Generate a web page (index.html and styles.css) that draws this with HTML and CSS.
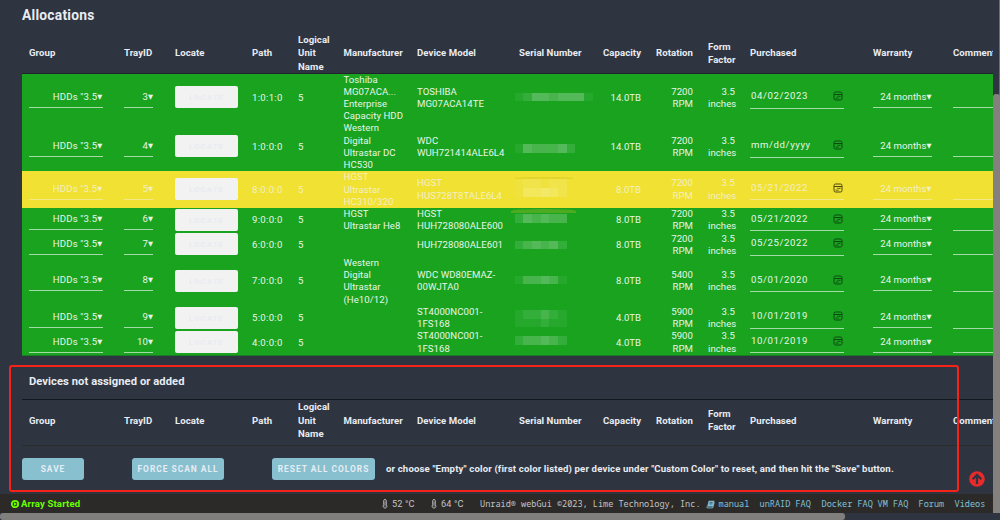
FILE: index.html
```
<!DOCTYPE html>
<html lang="en">
<head>
    <meta charset="utf-8">
    <title>Disk Location</title>
    <link rel="stylesheet" href="styles.css">
</head>
<body>
    <svg class="defs" width="0" height="0">
        <symbol id="calendar" viewBox="0 0 10 10">
            <rect x="1" y="1" width="8" height="8" rx="1.6" fill="none" stroke="currentColor" stroke-width="1"/>
            <path d="M1 3.5h8" stroke="currentColor" stroke-width="1"/>
            <path d="M4.4 5.4h1.1M6.2 5.4h1.2M2.6 7.1h1.1M4.4 7.1h1.1" stroke="currentColor" stroke-width="1.1"/>
        </symbol>
        <symbol id="thermo" viewBox="0 0 6 10">
            <path d="M1.7 5.8V1.8a1.3 1.3 0 0 1 2.6 0v4a1.9 1.9 0 1 1-2.6 0z" fill="none" stroke="currentColor" stroke-width="0.9"/>
            <path d="M3 2.5v5" stroke="currentColor" stroke-width="0.7"/>
        </symbol>
    </svg>

    <div class="content">
        <h1>Allocations</h1>
        <div class="row head">
            <div>Group</div><div>TrayID</div><div>Locate</div><div>Path</div><div>Logical<br>Unit<br>Name</div>
            <div>Manufacturer</div><div>Device Model</div><div>Serial Number</div><div>Capacity</div><div>Rotation</div>
            <div>Form<br>Factor</div><div>Purchased</div><div>Warranty</div><div>Comment</div>
        </div>
        <div class="devices">
            <div class="row">
                <div class="select group">HDDs "3.5<b>▼</b></div><div class="select tray">3<b>▼</b></div>
                <button class="locate">LOCATE</button><div class="path">1:0:1:0</div><div>5</div>
                <div>Toshiba<br>MG07ACA...<br>Enterprise<br>Capacity HDD</div><div>TOSHIBA<br>MG07ACA14TE</div>
                <div class="serial t1"><i class="m1"></i><i class="m2"></i><i class="m4"></i><i class="m4"></i><i class="m3"></i><i class="m4"></i><i class="m4"></i><i class="m4"></i><i class="m1"></i></div>
                <div class="num cap">14.0TB</div><div class="num rot">7200<br>RPM</div><div class="num form">3.5<br>inches</div>
                <div class="date">04/02/2023<svg><use href="#calendar"/></svg></div><div class="select warranty">24 months<b>▼</b></div><div class="comment"></div>
            </div>
            <div class="row">
                <div class="select group">HDDs "3.5<b>▼</b></div><div class="select tray">4<b>▼</b></div>
                <button class="locate">LOCATE</button><div class="path">1:0:0:0</div><div>5</div>
                <div>Western<br>Digital<br>Ultrastar DC<br>HC530</div><div>WDC<br>WUH721414ALE6L4</div>
                <div class="serial t2"><i class="m1"></i><i class="m4"></i><i class="m3"></i><i class="m3"></i><i class="m3"></i><i class="m4"></i><i class="m2"></i></div>
                <div class="num cap">14.0TB</div><div class="num rot">7200<br>RPM</div><div class="num form">3.5<br>inches</div>
                <div class="date">mm/dd/yyyy<svg><use href="#calendar"/></svg></div><div class="select warranty">24 months<b>▼</b></div><div class="comment"></div>
            </div>
            <div class="row warm">
                <div class="select group">HDDs "3.5<b>▼</b></div><div class="select tray">5<b>▼</b></div>
                <button class="locate">LOCATE</button><div class="path">8:0:0:0</div><div>5</div>
                <div>HGST<br>Ultrastar<br>HC310/320</div><div>HGST<br>HUS728T8TALE6L4</div>
                <div class="serial t3"><i class="m1"></i><i class="m2"></i><i class="m2"></i><i class="m1"></i><i class="m2"></i><i class="m2"></i><i class="m1"></i><i class="m3"></i><i class="m3"></i><i class="m4"></i><i class="m3"></i><i class="m2"></i></div>
                <div class="num cap">8.0TB</div><div class="num rot">7200<br>RPM</div><div class="num form">3.5<br>inches</div>
                <div class="date">05/21/2022<svg><use href="#calendar"/></svg></div><div class="select warranty">24 months<b>▼</b></div><div class="comment"></div>
            </div>
            <div class="row">
                <div class="select group">HDDs "3.5<b>▼</b></div><div class="select tray">6<b>▼</b></div>
                <button class="locate">LOCATE</button><div class="path">9:0:0:0</div><div>5</div>
                <div>HGST<br>Ultrastar He8</div><div>HGST<br>HUH728080ALE600</div>
                <div class="serial t4"><i class="m2"></i><i class="m4"></i><i class="m3"></i><i class="m4"></i><i class="m3"></i><i class="m3"></i></div>
                <div class="num cap">8.0TB</div><div class="num rot">7200<br>RPM</div><div class="num form">3.5<br>inches</div>
                <div class="date">05/21/2022<svg><use href="#calendar"/></svg></div><div class="select warranty">24 months<b>▼</b></div><div class="comment"></div>
            </div>
            <div class="row">
                <div class="select group">HDDs "3.5<b>▼</b></div><div class="select tray">7<b>▼</b></div>
                <button class="locate">LOCATE</button><div class="path">6:0:0:0</div><div>5</div>
                <div></div><div>HUH728080ALE601</div>
                <div class="serial t5"><i class="m2"></i><i class="m3"></i><i class="m4"></i><i class="m3"></i><i class="m4"></i><i class="m2"></i></div>
                <div class="num cap">8.0TB</div><div class="num rot">7200<br>RPM</div><div class="num form">3.5<br>inches</div>
                <div class="date">05/25/2022<svg><use href="#calendar"/></svg></div><div class="select warranty">24 months<b>▼</b></div><div class="comment"></div>
            </div>
            <div class="row">
                <div class="select group">HDDs "3.5<b>▼</b></div><div class="select tray">8<b>▼</b></div>
                <button class="locate">LOCATE</button><div class="path">7:0:0:0</div><div>5</div>
                <div>Western<br>Digital<br>Ultrastar<br>(He10/12)</div><div>WDC WD80EMAZ-<br>00WJTA0</div>
                <div class="serial t6"><i class="m1"></i><i class="m3"></i><i class="m3"></i><i class="m4"></i><i class="m3"></i><i class="m1"></i></div>
                <div class="num cap">8.0TB</div><div class="num rot">5400<br>RPM</div><div class="num form">3.5<br>inches</div>
                <div class="date">05/01/2020<svg><use href="#calendar"/></svg></div><div class="select warranty">24 months<b>▼</b></div><div class="comment"></div>
            </div>
            <div class="row">
                <div class="select group">HDDs "3.5<b>▼</b></div><div class="select tray">9<b>▼</b></div>
                <button class="locate">LOCATE</button><div class="path">5:0:0:0</div><div>5</div>
                <div></div><div>ST4000NC001-<br>1FS168</div>
                <div class="serial t7"><i class="m1"></i><i class="m2"></i><i class="m2"></i><i class="m3"></i><i class="m2"></i><i class="m1"></i><i class="m1"></i><i class="m1"></i><i class="m1"></i><i class="m2"></i><i class="m1"></i><i class="m1"></i></div>
                <div class="num cap">4.0TB</div><div class="num rot">5900<br>RPM</div><div class="num form">3.5<br>inches</div>
                <div class="date">10/01/2019<svg><use href="#calendar"/></svg></div><div class="select warranty">24 months<b>▼</b></div><div class="comment"></div>
            </div>
            <div class="row">
                <div class="select group">HDDs "3.5<b>▼</b></div><div class="select tray">10<b>▼</b></div>
                <button class="locate">LOCATE</button><div class="path">4:0:0:0</div><div>5</div>
                <div></div><div>ST4000NC001-<br>1FS168</div>
                <div class="serial t8"><i class="m2"></i><i class="m3"></i><i class="m3"></i><i class="m4"></i><i class="m3"></i><i class="m2"></i></div>
                <div class="num cap">4.0TB</div><div class="num rot">5900<br>RPM</div><div class="num form">3.5<br>inches</div>
                <div class="date">10/01/2019<svg><use href="#calendar"/></svg></div><div class="select warranty">24 months<b>▼</b></div><div class="comment"></div>
            </div>
        </div>

        <h2>Devices not assigned or added</h2>
        <div class="row head unassigned">
            <div>Group</div><div>TrayID</div><div>Locate</div><div>Path</div><div>Logical<br>Unit<br>Name</div>
            <div>Manufacturer</div><div>Device Model</div><div>Serial Number</div><div>Capacity</div><div>Rotation</div>
            <div>Form<br>Factor</div><div>Purchased</div><div>Warranty</div><div>Comment</div>
        </div>
        <div class="actions">
            <button class="save">SAVE</button>
            <button class="scan">FORCE SCAN ALL</button>
            <button class="reset">RESET ALL COLORS</button>
            <span>or choose "Empty" color (first color listed) per device under "Custom Color" to reset, and then hit the "Save" button.</span>
        </div>
    </div>

    <div class="highlight"></div>
    <svg class="back-to-top" viewBox="0 0 16 16">
        <circle cx="8" cy="8" r="7.8" fill="#e72a2a"/>
        <path d="M8 13V4.2M3.7 8.2L8 3.9l4.3 4.3" fill="none" stroke="#2e3440" stroke-width="2.2"/>
    </svg>

    <footer>
        <svg class="play" viewBox="0 0 10 10"><circle cx="5" cy="5" r="3.2" fill="none" stroke="#6aff00" stroke-width="1.8"/><path d="M3.9 3.1L7 5 3.9 6.9z" fill="#6aff00"/></svg>
        <strong>Array Started</strong>
        <svg class="thermo cpu"><use href="#thermo"/></svg><span class="temp">52 °C</span>
        <svg class="thermo"><use href="#thermo"/></svg><span class="temp">64 °C</span>
        <span class="copy">Unraid® webGui ©2023, Lime Technology, Inc.</span>
        <svg class="book" viewBox="0 0 9 9"><path d="M2.7.8h5.8L6.9 6.6H1.2z" fill="#81c0d8"/><path d="M1.4 6.2c-1 .3-.8 1.7.1 1.7h5.2l1.6-5.4" fill="none" stroke="#81c0d8" stroke-width="0.9"/><path d="M3.7 2.4h3M3.3 3.9h3" stroke="#2b2a29" stroke-width="0.6"/></svg>
        <a class="manual">manual</a><a class="faq">unRAID FAQ</a><a class="docker">Docker FAQ</a><a class="vm">VM FAQ</a><a class="forum">Forum</a><a class="videos">Videos</a>
    </footer>

    <div class="scroll-y"><div class="thumb"></div></div>
    <div class="scroll-x"><div class="thumb"></div></div>
</body>
</html>
```
FILE: styles.css
```
* {
    box-sizing: border-box;
}

body {
    margin: 0;
    width: 1000px;
    height: 520px;
    overflow: hidden;
    position: relative;
    background: #2e3440;
    color: #e8ecf2;
    font-family: Roboto, "Noto Sans", sans-serif;
    font-size: 9.6px;
    line-height: 12.23px;
}

.defs {
    position: absolute;
}

.content {
    width: 993px;
    height: 494px;
    padding-left: 22px;
    overflow: hidden;
}

h1 {
    margin: 0;
    padding-top: 6px;
    height: 33px;
    font-size: 13.8px;
    line-height: 18px;
    letter-spacing: 0.25px;
}

.row {
    display: grid;
    grid-template-columns: 102px 51px 77px 46px 45.5px 73.5px 102px 84px 53px 52px 42px 123px 80px 60px;
    width: 991px;
    align-items: center;
    white-space: nowrap;
}

.row > :first-child {
    margin-left: 7px;
}

.head {
    height: 40.5px;
    font-weight: bold;
    font-size: 9.6px;
    line-height: 13.3px;
    letter-spacing: 0.06px;
    border-bottom: 1px solid #20242c;
}

.devices {
    background: #19a31f;
    color: #e6f6e7;
    letter-spacing: 0.05px;
    border-bottom: 1px solid #1b7a28;
}

.row.warm {
    background: #f0e132;
    color: #f3efc4;
}

.select {
    height: 20px;
    padding-top: 3px;
    border-bottom: 1px solid #a5dba8;
    text-align: right;
}

.select b {
    font-family: "DejaVu Sans", sans-serif;
    font-size: 6.5px;
    font-weight: normal;
    vertical-align: 1px;
    line-height: 1;
}

.group {
    width: 73.5px;
    letter-spacing: 0.15px;
}

.tray {
    width: 29px;
}

.warranty {
    width: 58.5px;
}

.path {
    letter-spacing: 0.3px;
}

.locate {
    width: 63px;
    height: 22px;
    margin: -1px 0 0;
    padding: 1px 0 0;
    border: 0;
    border-radius: 2px;
    background: #f2f2f2;
    color: #e9ebf1;
    font: bold 8px Roboto, sans-serif;
    letter-spacing: 1px;
}

.num {
    text-align: right;
}

.cap {
    width: 38px;
    letter-spacing: 0;
}

.rot {
    width: 37px;
}

.form {
    width: 27px;
}

.date {
    display: flex;
    justify-content: space-between;
    width: 94px;
    height: 21.5px;
    padding: 3px 1px 0;
    border-bottom: 1px solid #a5dba8;
    letter-spacing: 0.6px;
}

.date svg {
    width: 10px;
    height: 10px;
    margin-top: 1px;
    color: #0d4a12;
}

.comment {
    height: 21px;
    border-bottom: 1px solid #a5dba8;
}

.warm .select,
.warm .date,
.warm .comment {
    border-color: #f3e98a;
}

.warm .date svg {
    color: #4d4812;
}

/* redacted serial numbers */
.serial {
    position: relative;
    display: flex;
    flex-wrap: wrap;
    align-self: start;
    width: 79px;
    height: 0;
    margin-left: -4.5px;
}

.serial i {
    width: 8.7px;
    height: 8.7px;
    background: #fff;
}

.m1 { opacity: 0.06; }
.m2 { opacity: 0.12; }
.m3 { opacity: 0.2; }
.m4 { opacity: 0.26; }

.t1 { top: 19px; }
.t2 { top: 22px; }
.t3 { top: 8px; width: 53px; }
.t4 { top: 6px; width: 53px; }
.t5 { top: 8px; width: 53px; }
.t6 { top: 18.5px; width: 53px; }
.t7 { top: 4px; width: 53px; }
.t8 { top: 6px; width: 53px; }

.t3::before,
.t4::before {
    content: "";
    position: absolute;
    left: 0;
    top: -2px;
    width: 58px;
    height: 2px;
    border-radius: 50% 50% 0 0;
    background: #e2d52c;
}

.t4::before {
    left: -4px;
    top: -5px;
    width: 65px;
    height: 4px;
    background: #4cab20;
}

h2 {
    margin: 0;
    height: 44px;
    padding: 16px 7px 0;
    border-bottom: 1px solid #14171e;
    font-size: 11.2px;
    line-height: 20px;
    letter-spacing: 0.06px;
}

.unassigned {
    height: 46px;
    padding-bottom: 4px;
    border-bottom-color: #2b2b2c;
}

.actions {
    display: flex;
    align-items: center;
    height: 47px;
    font-size: 9.6px;
    font-weight: bold;
    letter-spacing: 0.14px;
    white-space: nowrap;
}

.actions button {
    height: 22px;
    padding: 0;
    border: 0;
    border-radius: 3px;
    background: #88c0d0;
    color: #e5edf3;
    font: bold 8.4px Roboto, sans-serif;
    letter-spacing: 1px;
}

.save { width: 62px; }
.scan { width: 92px; margin-left: 48px; }
.reset { width: 103px; margin: 0 11px 0 48px; }

/* red frame around the unassigned devices */
.highlight {
    position: absolute;
    left: 9px;
    top: 365px;
    width: 950px;
    height: 127px;
    border: 2px solid #f72218;
    border-radius: 3px;
}

.back-to-top {
    position: absolute;
    left: 968.5px;
    top: 471px;
    width: 16px;
    height: 16px;
}

footer {
    display: flex;
    align-items: center;
    width: 993px;
    height: 19px;
    padding: 1px 0 0 10px;
    background: #2b2a29;
    color: #c3c3c3;
    font-family: "Noto Sans Mono", "DejaVu Sans Mono", monospace;
    font-size: 8.55px;
    white-space: nowrap;
}

footer strong {
    width: 362px;
    padding-left: 1px;
    color: #6aff00;
    font-family: Roboto, sans-serif;
    font-size: 9.6px;
    letter-spacing: 0.14px;
}

footer a {
    color: #81c0d8;
}

.play {
    width: 10px;
    height: 10px;
}

.thermo {
    width: 6px;
    height: 10px;
    margin-right: 4px;
}

.temp {
    width: 39px;
    font-family: Roboto, sans-serif;
    font-size: 9.2px;
    letter-spacing: 0.1px;
}

.copy { width: 225.5px; }
.book { width: 9px; height: 9px; margin-right: 4px; }
.manual { width: 41px; }
.faq { width: 62px; }
.docker { width: 56px; }
.vm { width: 41px; }
.forum { width: 36px; }

.scroll-y {
    position: absolute;
    right: 0;
    top: 0;
    width: 7px;
    height: 513px;
    border-right: 1px solid #6c6e73;
}

.scroll-y .thumb {
    width: 7px;
    height: 419px;
    margin-top: 94px;
    border-radius: 3px 3px 0 0;
    background: #83807e;
}

.scroll-x {
    position: absolute;
    left: 0;
    bottom: 0;
    width: 1000px;
    height: 7px;
    background: #2e3440;
}

.scroll-x .thumb {
    width: 845px;
    height: 7px;
    border-radius: 3px;
    background: #807f7e;
}
```
